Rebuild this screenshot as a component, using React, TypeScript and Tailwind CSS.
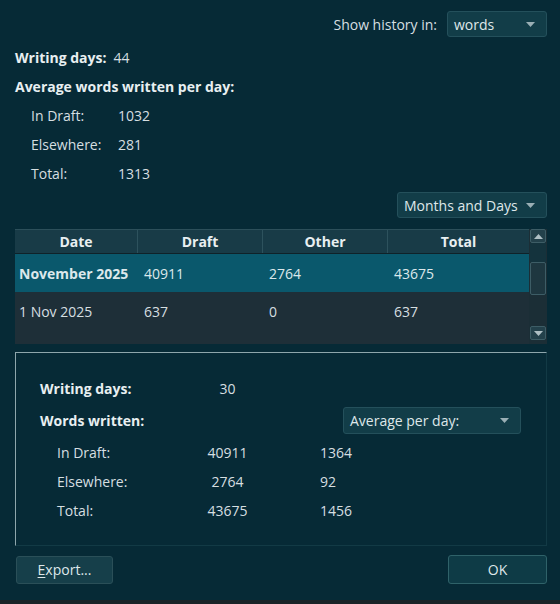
import React from "react";

const font = { fontFamily: '"Open Sans", "Noto Sans", "Liberation Sans", sans-serif' };

function Combo({ label, className }: { label: string; className: string }) {
  return (
    <div
      className={`flex items-center justify-between rounded-[3px] border border-[#24505b] bg-[#123d48] pl-[6px] pr-[11px] text-[#dfe8ea] ${className}`}
    >
      <span>{label}</span>
      <svg width="9" height="5" viewBox="0 0 9 5">
        <path d="M0 0 L9 0 L4.5 5 Z" fill="#9aafb5" />
      </svg>
    </div>
  );
}

function Arrow({ up }: { up?: boolean }) {
  return (
    <div className="flex h-[14px] items-center justify-center rounded-[2px] border border-[#3d5d66] bg-[#23414b]">
      <svg width="9" height="5" viewBox="0 0 9 5">
        <path d={up ? "M0 5 L9 5 L4.5 0 Z" : "M0 0 L9 0 L4.5 5 Z"} fill="#aebfc4" />
      </svg>
    </div>
  );
}

const columns = ["w-[123px]", "w-[125px]", "w-[125px]", "w-[141px]"];

export default function App() {
  const rows = [
    { cells: ["November 2025", "40911", "2764", "43675"], selected: true },
    { cells: ["1 Nov 2025", "637", "0", "637"], selected: false },
  ];

  return (
    <div
      className="flex h-[604px] w-[560px] flex-col bg-[#062a36] text-[14px] text-[#d6dfe1]"
      style={font}
    >
      <div className="flex flex-1 flex-col pl-[15px] pr-[13px]">
        {/* history unit */}
        <div className="mt-[11px] flex items-center justify-end gap-[10px]">
          <span>Show history in:</span>
          <Combo label="words" className="h-[26px] w-[100px]" />
        </div>

        {/* overall stats */}
        <div className="mt-[6px] flex flex-col">
          <div className="flex h-[29px] items-center gap-[7px]">
            <span className="font-bold text-[#e8eff1]">Writing days:</span>
            <span>44</span>
          </div>
          <div className="flex h-[29px] items-center font-bold text-[#e8eff1]">
            Average words written per day:
          </div>
          {[
            ["In Draft:", "1032"],
            ["Elsewhere:", "281"],
            ["Total:", "1313"],
          ].map(([k, v]) => (
            <div key={k} className="flex h-[29px] items-center pl-[16px]">
              <span className="w-[87px]">{k}</span>
              <span>{v}</span>
            </div>
          ))}
        </div>

        <div className="mt-[4px] flex justify-end">
          <Combo label="Months and Days" className="h-[26px] w-[150px]" />
        </div>

        {/* table */}
        <div className="mt-[11px] flex h-[115px] bg-[#1e2f38]">
          <div className="flex flex-1 flex-col">
            <div className="flex h-[25px] border-t border-b border-t-[#2c4f5a] border-b-[#0f2229] bg-[#183b47] font-bold text-[#e8eff1]">
              {["Date", "Draft", "Other", "Total"].map((h, i) => (
                <div
                  key={h}
                  className={`${columns[i]} flex items-center justify-center ${i < 3 ? "border-r border-[#2d525d]" : ""}`}
                >
                  {h}
                </div>
              ))}
            </div>
            {rows.map((r) => (
              <div
                key={r.cells[0]}
                className={`flex h-[38px] items-center ${r.selected ? "bg-[#0a586c] text-[#dce8eb]" : "text-[#d6dfe1]"}`}
              >
                {r.cells.map((c, i) => (
                  <div
                    key={i}
                    className={`${columns[i]} ${i === 0 ? "pl-[4px]" : "pl-[6px]"} ${i === 0 && r.selected ? "font-bold" : ""}`}
                  >
                    {c}
                  </div>
                ))}
              </div>
            ))}
          </div>
          {/* scrollbar */}
          <div className="flex w-[18px] flex-col bg-[#1b2e36] px-px pb-[4px]">
            <Arrow up />
            <div className="h-[19px] bg-[#14333d]" />
            <div className="h-[33px] rounded-[2px] border border-[#3d5d66] bg-[#1e3740]" />
            <div className="flex-1" />
            <Arrow />
          </div>
        </div>

        {/* detail frame */}
        <div className="mt-[8px] flex h-[194px] flex-col border border-t-[#8ea6ac] border-l-[#8ea6ac] border-r-[#123a45] border-b-[#123a45] pl-[24px] pr-[25px] pt-[21px]">
          <div className="flex h-[29px] items-center">
            <span className="w-[150px] font-bold text-[#e8eff1]">Writing days:</span>
            <span className="w-[75px] text-center">30</span>
          </div>
          <div className="flex h-[35px] items-center justify-between">
            <span className="font-bold text-[#e8eff1]">Words written:</span>
            <Combo label="Average per day:" className="h-[27px] w-[178px]" />
          </div>
          {[
            ["In Draft:", "40911", "1364"],
            ["Elsewhere:", "2764", "92"],
            ["Total:", "43675", "1456"],
          ].map(([k, a, b]) => (
            <div key={k} className="flex h-[29px] items-center">
              <span className="w-[150px] pl-[17px]">{k}</span>
              <span className="w-[75px] text-center">{a}</span>
              <span className="pl-[55px]">{b}</span>
            </div>
          ))}
        </div>

        {/* buttons */}
        <div className="mt-[9px] flex items-center justify-between">
          <button className="ml-px h-[28px] w-[97px] rounded-[3px] border border-[#2a4f58] bg-[#163f4a] text-[#dfe8ea]">
            <span className="underline decoration-1 underline-offset-2">E</span>xport...
          </button>
          <button className="h-[29px] w-[99px] rounded-[3px] border border-[#2f6269] bg-[#0e3b46] text-[#dfe8ea]">
            OK
          </button>
        </div>
      </div>
      <div className="h-[4px] bg-[#1a2327]" />
    </div>
  );
}
